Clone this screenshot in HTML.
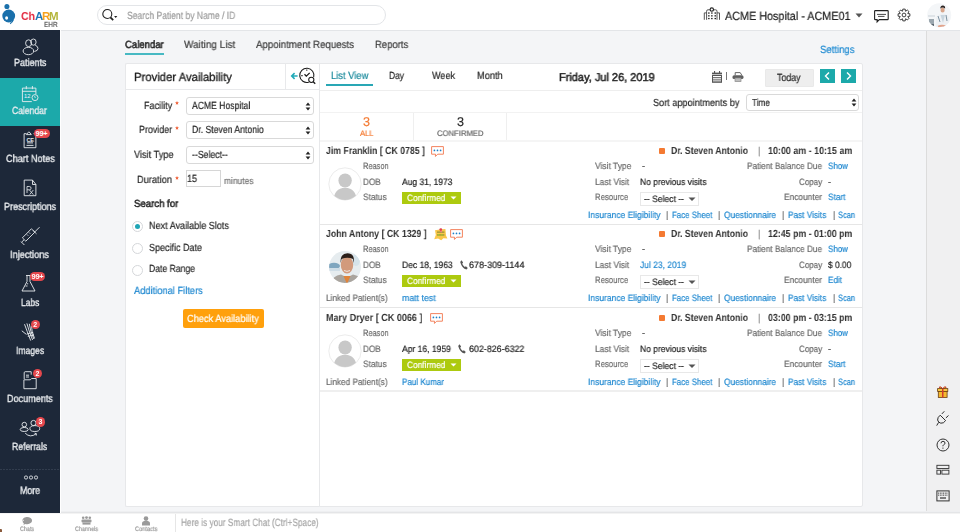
<!DOCTYPE html>
<html><head><meta charset="utf-8"><style>
html,body{margin:0;padding:0;width:960px;height:532px;overflow:hidden;background:#fff;font-family:"Liberation Sans",sans-serif;}
.t{position:absolute;white-space:nowrap;text-rendering:geometricPrecision;will-change:transform;}
svg{overflow:visible}
</style></head><body>
<div style="position:absolute;left:0px;top:0px;width:960px;height:30px;background:#fff"></div><div style="position:absolute;left:61px;top:30px;width:865px;height:483px;background:#f4f5f7"></div><div style="position:absolute;left:61px;top:30px;width:899px;height:1px;background:#e3e5e8"></div><div style="position:absolute;left:926px;top:30px;width:34px;height:483px;background:#f0f0f1"></div><div style="position:absolute;left:926px;top:30px;width:1px;height:483px;background:#dcdcdc"></div><div style="position:absolute;left:926px;top:30px;width:34px;height:1px;background:#e3e5e8"></div><div style="position:absolute;left:0px;top:30px;width:60px;height:483px;background:#1d2839"></div><div style="position:absolute;left:60px;top:30px;width:1px;height:483px;background:#fff"></div><div style="position:absolute;left:0px;top:78px;width:60px;height:48px;background:#1ca9aa"></div><div style="position:absolute;left:61px;top:511px;width:899px;height:1px;background:#eeeff1"></div><div style="position:absolute;left:61px;top:512px;width:899px;height:1px;background:#e4e5e7"></div><div style="position:absolute;left:0px;top:513px;width:960px;height:19px;background:#fff"></div><div style="position:absolute;left:0px;top:513px;width:960px;height:1px;background:#f3f3f3"></div><div style="position:absolute;left:175px;top:514px;width:1px;height:18px;background:#e6e6e6"></div><svg style="position:absolute;left:0px;top:0px;" width="60" height="30" viewBox="0 0 60 30">
<ellipse cx="6.9" cy="6.5" rx="2.5" ry="2.6" fill="#1a70ab"/>
<circle cx="8.7" cy="16" r="6.4" fill="#1a70ab"/>
<path d="M13.3,19.6 q-0.6,2.6 -3.2,4" stroke="#1a70ab" stroke-width="1.2" fill="none"/>
<ellipse cx="6.6" cy="18" rx="1.5" ry="1.8" fill="#fff"/>
</svg><div class="t" style="left:20.50px;top:12px;font-size:11.5px;line-height:11.5px;color:#e2263d;font-weight:700;transform:scaleX(0.9133);transform-origin:0 0;">Ch</div><div class="t" style="left:34.50px;top:12px;font-size:11.5px;line-height:11.5px;color:#1f78b9;font-weight:700;">A</div><div class="t" style="left:41.50px;top:12px;font-size:11.5px;line-height:11.5px;color:#f6a21e;font-weight:700;">R</div><div class="t" style="left:48.50px;top:12px;font-size:11.5px;line-height:11.5px;color:#b3b53a;font-weight:700;">M</div><div class="t" style="left:43.50px;top:21px;font-size:7.5px;line-height:7.5px;color:#666;font-weight:700;transform:scaleX(0.8527);transform-origin:0 0;">EHR</div><div style="position:absolute;left:97px;top:5px;width:287px;height:18px;border:1px solid #e3e5e8;border-radius:10px;background:#fff"></div><svg style="position:absolute;left:100px;top:9px;" width="20" height="13" viewBox="0 0 20 13"><circle cx="7.3" cy="5" r="4.5" fill="none" stroke="#222" stroke-width="1.1"/><path d="M10.4,8.3 l2.8,2.8" stroke="#222" stroke-width="1.8"/><path d="M14.1,7.1 h3.2 l-1.6,1.9z" fill="#222"/></svg><div class="t" style="left:126.70px;top:11px;font-size:10.5px;line-height:10.5px;color:#9d9d9d;font-weight:400;transform:scaleX(0.8139);transform-origin:0 0;-webkit-text-stroke:0.2px currentColor;">Search Patient by Name / ID</div><svg style="position:absolute;left:703px;top:7px;" width="18" height="14" viewBox="0 0 18 14"><g fill="none" stroke="#555" stroke-width="1"><path d="M3.6,12.8 V4.2 Q3.6,2.8 5,2.8 H12.6 Q14,2.8 14,4.2 V12.8"/><path d="M1.3,12.8 V5.9 H3.6 M14,5.9 H16.5 V12.8"/></g><circle cx="8.8" cy="2.6" r="1.7" fill="#fff" stroke="#222" stroke-width="1.1"/><g fill="#222"><rect x="5.1" y="5.4" width="1.5" height="1.3"/><rect x="8.1" y="5.4" width="1.5" height="1.3"/><rect x="11.5" y="5.4" width="1.5" height="1.3"/><rect x="5.1" y="8.2" width="1.5" height="1.3"/><rect x="8.1" y="8.2" width="1.5" height="1.3"/><rect x="11.5" y="8.2" width="1.5" height="1.3"/><rect x="5.1" y="10.9" width="1.5" height="1.3"/><rect x="8.1" y="10.9" width="1.5" height="1.3"/><rect x="11.5" y="10.9" width="1.5" height="1.3"/></g></svg><div class="t" style="left:725.00px;top:11px;font-size:11.9px;line-height:11.9px;color:#222;font-weight:400;transform:scaleX(0.9087);transform-origin:0 0;-webkit-text-stroke:0.2px currentColor;">ACME Hospital - ACME01</div><svg style="position:absolute;left:855px;top:13px;" width="8" height="5" viewBox="0 0 8 5"><path d="M0.5,0.5 h7 l-3.5,4z" fill="#555"/></svg><svg style="position:absolute;left:873px;top:9px;" width="16" height="14" viewBox="0 0 16 14"><path d="M2.3,1.6 h12.2 q0.7,0 0.7,0.7 v7.6 q0,0.7 -0.7,0.7 h-8.2 l-2.2,2.2 v-2.2 h-1.8 q-0.7,0 -0.7,-0.7 v-7.6 q0,-0.7 0.7,-0.7z" fill="none" stroke="#222" stroke-width="1.1"/><path d="M4,5.4 h9 M5,7.4 h6.5" stroke="#333" stroke-width="0.9"/></svg><svg style="position:absolute;left:897px;top:8px;" width="14" height="14" viewBox="0 0 14 14"><g fill="none" stroke="#333" stroke-width="0.95"><circle cx="7" cy="7" r="1.9"/><path d="M5.56,3.16 L5.81,1.12 L8.19,1.12 L8.44,3.16 L8.69,3.27 L10.32,2.00 L12.00,3.68 L10.73,5.31 L10.84,5.56 L12.88,5.81 L12.88,8.19 L10.84,8.44 L10.73,8.69 L12.00,10.32 L10.32,12.00 L8.69,10.73 L8.44,10.84 L8.19,12.88 L5.81,12.88 L5.56,10.84 L5.31,10.73 L3.68,12.00 L2.00,10.32 L3.27,8.69 L3.16,8.44 L1.12,8.19 L1.12,5.81 L3.16,5.56 L3.27,5.31 L2.00,3.68 L3.68,2.00 L5.31,3.27z" stroke-linejoin="round"/></g></svg><svg style="position:absolute;left:926px;top:2px;" width="26" height="26" viewBox="0 0 26 26"><defs><clipPath id="av"><circle cx="13.2" cy="13.2" r="12"/></clipPath></defs>
<g clip-path="url(#av)"><rect x="0" y="0" width="26" height="26" fill="#f4f6f8"/>
<rect x="2" y="13" width="7" height="2" fill="#dfe4e8"/><rect x="3" y="17" width="5" height="7" fill="#9aa6ae"/><rect x="4" y="22" width="4" height="4" fill="#5d6870"/>
<path d="M10,26 v-10 q2,-4 6,-4.5 q5,0 7,4 v10.5z" fill="#eef1f4"/>
<path d="M14.5,13 l2.5,8 l2,-8z" fill="#c9d6df"/><path d="M12,14 l2,6 M20,13 l1,6" stroke="#6f8796" stroke-width="0.9"/>
<ellipse cx="16.6" cy="8" rx="2.1" ry="2.6" fill="#d8a58a"/><path d="M14.2,6.8 q0.3,-3.3 2.6,-3.3 q2.6,0 2.3,3.3 q-1,-1.2 -2.4,-1.2 q-1.6,0 -2.5,1.2z" fill="#2b2321"/>
<path d="M12,24.5 q4,-1.5 8,0" stroke="#e2a58e" stroke-width="1.8" fill="none"/></g></svg><div class="t" style="left:13.50px;top:59px;font-size:10.4px;line-height:10.4px;color:#e9ecef;font-weight:400;transform:scaleX(0.8649);transform-origin:0 0;-webkit-text-stroke:0.35px currentColor;">Patients</div><div class="t" style="left:12.20px;top:107px;font-size:10.4px;line-height:10.4px;color:#e9ecef;font-weight:400;transform:scaleX(0.8246);transform-origin:0 0;-webkit-text-stroke:0.35px currentColor;">Calendar</div><div class="t" style="left:5.60px;top:155px;font-size:10.4px;line-height:10.4px;color:#e9ecef;font-weight:400;transform:scaleX(0.8813);transform-origin:0 0;-webkit-text-stroke:0.35px currentColor;">Chart Notes</div><div class="t" style="left:3.80px;top:203px;font-size:10.4px;line-height:10.4px;color:#e9ecef;font-weight:400;transform:scaleX(0.8684);transform-origin:0 0;-webkit-text-stroke:0.35px currentColor;">Prescriptions</div><div class="t" style="left:10.30px;top:251px;font-size:10.4px;line-height:10.4px;color:#e9ecef;font-weight:400;transform:scaleX(0.8853);transform-origin:0 0;-webkit-text-stroke:0.35px currentColor;">Injections</div><div class="t" style="left:20.70px;top:299px;font-size:10.4px;line-height:10.4px;color:#e9ecef;font-weight:400;transform:scaleX(0.8116);transform-origin:0 0;-webkit-text-stroke:0.35px currentColor;">Labs</div><div class="t" style="left:16.00px;top:347px;font-size:10.4px;line-height:10.4px;color:#e9ecef;font-weight:400;transform:scaleX(0.8269);transform-origin:0 0;-webkit-text-stroke:0.35px currentColor;">Images</div><div class="t" style="left:7.10px;top:395px;font-size:10.4px;line-height:10.4px;color:#e9ecef;font-weight:400;transform:scaleX(0.8726);transform-origin:0 0;-webkit-text-stroke:0.35px currentColor;">Documents</div><div class="t" style="left:12.20px;top:443px;font-size:10.4px;line-height:10.4px;color:#e9ecef;font-weight:400;transform:scaleX(0.8343);transform-origin:0 0;-webkit-text-stroke:0.35px currentColor;">Referrals</div><div class="t" style="left:19.70px;top:486px;font-size:10.8px;line-height:10.8px;color:#e9ecef;font-weight:400;transform:scaleX(0.8170);transform-origin:0 0;-webkit-text-stroke:0.4px currentColor;">More</div><svg style="position:absolute;left:20px;top:36px;" width="22" height="20" viewBox="0 0 22 20"><g stroke="#e9ecef" stroke-width="0.9" fill="none"><ellipse cx="13.4" cy="6.1" rx="2.7" ry="3.1"/><path d="M15.2,9.2 q2.8,1 2.8,3.4 q0,2.2 -3.6,2.9"/><ellipse cx="8.6" cy="7.2" rx="3" ry="3.4"/><ellipse cx="8.4" cy="15" rx="5.3" ry="3.7"/></g></svg><svg style="position:absolute;left:20px;top:84px;" width="22" height="19" viewBox="0 0 22 19"><g stroke="#e9ecef" stroke-width="0.9" fill="none"><path d="M11.8,17.6 h-9.4 v-13.5 h13.5 v6"/><path d="M2.4,7.3 h13.5"/><path d="M6.3,2 v3.2 M12.4,2 v3.2"/><circle cx="15" cy="13.6" r="3"/><path d="M14.6,12.2 l0.7,1.7"/></g><text x="4" y="14.2" font-family="Liberation Sans" font-size="5.8" fill="#eef">12</text></svg><svg style="position:absolute;left:22px;top:130px;" width="14" height="18" viewBox="0 0 14 18"><g stroke="#e9ecef" stroke-width="0.9" fill="none"><path d="M4.5,3.7 h-2.4 v14 h11.8 v-14 h-2.4"/><path d="M4.5,4.6 l1.2,-1.6 l1.2,-1.2 l1.2,1.2 l1.2,1.6z"/><path d="M5,12.9 h6 M4.5,15.4 h7"/></g><text x="4.4" y="11.6" font-family="Liberation Sans" font-size="5.5" font-weight="700" fill="#e9ecef">CE</text></svg><svg style="position:absolute;left:22px;top:179px;" width="16" height="18" viewBox="0 0 16 18"><g stroke="#e9ecef" stroke-width="0.9" fill="none"><path d="M2.2,1.1 h8.3 l3.4,4.4 v11.2 h-11.7z M10.5,1.1 v4.4 h3.4"/><path d="M5,14 v-6.5 h2.3 q1.8,0 1.8,1.7 q0,1.6 -1.8,1.6 h-2.3 M7.3,10.8 l4,4.8 M11.3,11 l-3.6,4.6" stroke-width="0.8"/></g></svg><svg style="position:absolute;left:20px;top:226px;" width="22" height="21" viewBox="0 0 22 21"><g stroke="#e9ecef" stroke-width="0.9" fill="none"><path d="M19.5,1.2 l-4.8,4.8 M13.2,4.5 l3.3,3.3 M14.8,6.2 l-9,9 l-3.4,-3.4 l9,-9z M4,13.8 l-2.4,2.4 M1,15.6 l3.4,3.4 M7,8.5 l1.2,1.2 M9,6.5 l1.2,1.2"/></g></svg><svg style="position:absolute;left:20px;top:274px;" width="18" height="19" viewBox="0 0 18 19"><g stroke="#e9ecef" stroke-width="0.9" fill="none"><path d="M6,1.5 h5 M7,1.5 v6 l-5,9.5 h13 l-5,-9.5 v-6"/><path d="M5.5,12 h2 M6.8,9.8 h1.4"/></g></svg><svg style="position:absolute;left:20px;top:321px;" width="18" height="22" viewBox="0 0 18 22"><g stroke="#e9ecef" stroke-width="0.9" fill="none" stroke-width="1"><path d="M4.5,3.2 l2.6,7 M6.9,2.4 l2.3,7.6 M9.3,2.8 l1.5,7.2 M11.6,5 l0.5,5.2 M1.8,9.8 l4.6,3.6 M7.1,10.2 l3.6,9.4 M9.2,10 l3.4,9 M10.8,10 l3,8 M12.1,10.2 l2.4,7.2 M6.8,13 l6.4,-1.6 M7.8,15.4 l6,-1.6"/></g></svg><svg style="position:absolute;left:21px;top:371px;" width="18" height="19" viewBox="0 0 18 19"><g stroke="#e9ecef" stroke-width="0.9" fill="none"><path d="M3.2,8 v-6.7 l1,-0.6 h6 v3"/><path d="M2.9,8.8 h6.4 l1.3,-1.3 h4.6 v10.2 h-12.3z"/><path d="M5,4.2 h3 M5,6 h3"/></g></svg><svg style="position:absolute;left:18px;top:420px;" width="24" height="19" viewBox="0 0 24 19"><g stroke="#e9ecef" stroke-width="0.9" fill="none"><circle cx="6.3" cy="4.6" r="2.3"/><path d="M2.2,9.6 q0,-2 4,-2.2 q4,0.2 4,2.2 q0,1.9 -4,1.9 q-4,0 -4,-1.9z"/><circle cx="15.5" cy="3" r="2.6"/><path d="M11.9,8.6 q0,-2.9 4.9,-3 q4.9,0.1 4.9,3 q0,2.9 -4.9,2.9 q-4.9,0 -4.9,-2.9z"/><path d="M7.2,13.2 q5,5 11,0.6 M16.6,13.2 l1.8,0.5 l-0.2,1.9"/></g></svg><svg style="position:absolute;left:23px;top:475px;" width="16" height="6" viewBox="0 0 16 6"><g stroke="#e9ecef" stroke-width="0.9" fill="none"><rect x="1.5" y="1" width="3" height="3" rx="1.2"/><rect x="6.5" y="1" width="3" height="3" rx="1.2"/><rect x="11.5" y="1" width="3" height="3" rx="1.2"/></g></svg><div style="position:absolute;left:0;top:469px;width:60px;height:1px;background:repeating-linear-gradient(90deg,#465264 0 1.2px,transparent 1.2px 3px);background-position:3.5px 0"></div><div style="position:absolute;left:33.5px;top:128.5px;width:16px;height:9px;border-radius:4.5px;background:#e5484d;color:#fff;font-size:7.5px;line-height:9px;text-align:center;font-weight:700;letter-spacing:-0.3px">99+</div><div style="position:absolute;left:30px;top:271.8px;width:15px;height:9px;border-radius:4.5px;background:#e5484d;color:#fff;font-size:7.5px;line-height:9px;text-align:center;font-weight:700;letter-spacing:-0.3px">99+</div><div style="position:absolute;left:30.6px;top:320.2px;width:9px;height:9px;border-radius:4.5px;background:#e5484d;color:#fff;font-size:7px;line-height:9px;text-align:center;font-weight:700;letter-spacing:-0.3px">2</div><div style="position:absolute;left:32.8px;top:369px;width:9px;height:9px;border-radius:4.5px;background:#e5484d;color:#fff;font-size:7px;line-height:9px;text-align:center;font-weight:700;letter-spacing:-0.3px">2</div><div style="position:absolute;left:35.6px;top:417.3px;width:9.4px;height:9.4px;border-radius:4.7px;background:#e5484d;color:#fff;font-size:7px;line-height:9.4px;text-align:center;font-weight:700;letter-spacing:-0.3px">3</div><svg style="position:absolute;left:21px;top:516px;" width="13" height="10" viewBox="0 0 13 10"><path d="M5.5,1 a5,3.6 0 1 1 -1,7 l-2.6,1.2 l1,-2 a5,3.6 0 0 1 2.6,-6.2z" fill="#9a9a9a"/><path d="M3,4 a4,3 0 0 0 1,5.5" stroke="#fff" fill="none" stroke-width="0.7"/></svg><div class="t" style="left:20.00px;top:527px;font-size:6.5px;line-height:6.5px;color:#9a9a9a;font-weight:400;transform:scaleX(0.8246);transform-origin:0 0;-webkit-text-stroke:0.2px currentColor;">Chats</div><svg style="position:absolute;left:81px;top:516px;" width="11" height="9" viewBox="0 0 11 9"><g fill="#9a9a9a"><circle cx="2.2" cy="1.8" r="1.3"/><circle cx="5.5" cy="1.6" r="1.4"/><circle cx="8.8" cy="1.8" r="1.3"/><rect x="0.5" y="3.6" width="10" height="3" rx="1"/><rect x="1.5" y="6.6" width="8" height="2"/></g></svg><div class="t" style="left:75.00px;top:527px;font-size:6.5px;line-height:6.5px;color:#9a9a9a;font-weight:400;transform:scaleX(0.8375);transform-origin:0 0;-webkit-text-stroke:0.2px currentColor;">Channels</div><svg style="position:absolute;left:142px;top:516px;" width="8" height="10" viewBox="0 0 8 10"><g fill="#9a9a9a"><circle cx="4" cy="2.6" r="2.3"/><path d="M0,9.5 v-2.2 q0,-2.5 4,-2.5 q4,0 4,2.5 v2.2z"/></g></svg><div class="t" style="left:134.90px;top:527px;font-size:6.5px;line-height:6.5px;color:#9a9a9a;font-weight:400;transform:scaleX(0.8694);transform-origin:0 0;-webkit-text-stroke:0.2px currentColor;">Contacts</div><div class="t" style="left:180.80px;top:518px;font-size:10.5px;line-height:10.5px;color:#a8a8a8;font-weight:400;transform:scaleX(0.7874);transform-origin:0 0;-webkit-text-stroke:0.2px currentColor;">Here is your Smart Chat (Ctrl+Space)</div><div style="position:absolute;left:0px;top:529px;width:2px;height:3px;background:#8a5a3c;border-top-right-radius:1px"></div><svg style="position:absolute;left:937px;top:386px;" width="12" height="12" viewBox="0 0 12 12"><path d="M5.7,2.6 q-2,-2.6 -3.4,-1.6 q-0.6,1.2 3.4,1.6 q4,-0.4 3.4,-1.6 q-1.4,-1 -3.4,1.6" fill="#f7c94a" stroke="#c0392b" stroke-width="0.9"/><rect x="0.6" y="2.6" width="10.2" height="2.8" fill="#f9c743" stroke="#6b3f12" stroke-width="0.8"/><rect x="1.3" y="5.4" width="8.8" height="6.1" fill="#f5b92f" stroke="#6b3f12" stroke-width="0.8"/><rect x="5" y="2.6" width="1.5" height="8.9" fill="#d23b2e"/></svg><svg style="position:absolute;left:935px;top:410px;" width="15" height="16" viewBox="0 0 15 16"><g fill="none" stroke="#222" stroke-width="0.95"><path d="M5.2,5.2 L10.6,10.6 Q8.6,13.6 5.8,13.2 Q3.2,12.6 2.6,10 Q2.4,7.4 5.2,5.2z"/><path d="M6.9,3.9 l2.4,-2.6 M10.9,7.9 l2.6,-2.4 M3.6,12.4 l-1.9,3.2"/></g></svg><svg style="position:absolute;left:936px;top:438px;" width="14" height="14" viewBox="0 0 14 14"><circle cx="7" cy="7" r="6" fill="none" stroke="#333" stroke-width="1"/><path d="M5,5.3 q0,-2 2,-2 q2,0 2,1.8 q0,1.3 -1.6,1.9 q-0.5,0.3 -0.5,1.3" fill="none" stroke="#333" stroke-width="1"/><circle cx="6.95" cy="10.1" r="0.7" fill="#333"/></svg><svg style="position:absolute;left:936px;top:464px;" width="14" height="11" viewBox="0 0 14 11"><g fill="none" stroke="#333" stroke-width="0.9"><rect x="0.9" y="1.3" width="12" height="3.2"/><rect x="0.9" y="6.2" width="3.6" height="3.9"/><rect x="5.9" y="6.2" width="7" height="3.9"/></g></svg><svg style="position:absolute;left:936px;top:490px;" width="14" height="12" viewBox="0 0 14 12"><rect x="0.9" y="0.9" width="12.2" height="10" fill="none" stroke="#333" stroke-width="1"/><g fill="#333"><rect x="2.20" y="2.6" width="0.9" height="1.1"/><rect x="3.85" y="2.6" width="0.9" height="1.1"/><rect x="5.50" y="2.6" width="0.9" height="1.1"/><rect x="7.15" y="2.6" width="0.9" height="1.1"/><rect x="8.80" y="2.6" width="0.9" height="1.1"/><rect x="10.45" y="2.6" width="0.9" height="1.1"/><rect x="2.20" y="4.6" width="0.9" height="1.1"/><rect x="3.85" y="4.6" width="0.9" height="1.1"/><rect x="5.50" y="4.6" width="0.9" height="1.1"/><rect x="7.15" y="4.6" width="0.9" height="1.1"/><rect x="8.80" y="4.6" width="0.9" height="1.1"/><rect x="10.45" y="4.6" width="0.9" height="1.1"/><rect x="4" y="7.4" width="6" height="1.2"/></g></svg><div class="t" style="left:125.25px;top:40px;font-size:10.5px;line-height:10.5px;color:#282828;font-weight:400;transform:scaleX(0.9094);transform-origin:0 0;-webkit-text-stroke:0.55px currentColor;">Calendar</div><div style="position:absolute;left:125px;top:53px;width:39px;height:2px;background:#47b9c3"></div><div class="t" style="left:184.40px;top:40px;font-size:10.5px;line-height:10.5px;color:#3d3d3d;font-weight:400;transform:scaleX(0.9503);transform-origin:0 0;-webkit-text-stroke:0.2px currentColor;">Waiting List</div><div class="t" style="left:256.00px;top:40px;font-size:10.5px;line-height:10.5px;color:#3d3d3d;font-weight:400;transform:scaleX(0.9225);transform-origin:0 0;-webkit-text-stroke:0.2px currentColor;">Appointment Requests</div><div class="t" style="left:374.70px;top:40px;font-size:10.5px;line-height:10.5px;color:#3d3d3d;font-weight:400;transform:scaleX(0.9059);transform-origin:0 0;-webkit-text-stroke:0.2px currentColor;">Reports</div><div class="t" style="left:819.90px;top:45px;font-size:10.5px;line-height:10.5px;color:#1f8bd2;font-weight:400;transform:scaleX(0.9094);transform-origin:0 0;-webkit-text-stroke:0.2px currentColor;">Settings</div><div style="position:absolute;left:125px;top:63px;width:194px;height:442px;background:#fff;border:1px solid #e7e8ea;border-right:none;border-radius:2px 0 0 2px"></div><div style="position:absolute;left:125px;top:89px;width:195px;height:1px;background:#e8e9eb"></div><div style="position:absolute;left:285px;top:63px;width:1px;height:27px;background:#e8e9eb"></div><div class="t" style="left:133.80px;top:72px;font-size:11.9px;line-height:11.9px;color:#181818;font-weight:400;transform:scaleX(0.9509);transform-origin:0 0;-webkit-text-stroke:0.3px currentColor;">Provider Availability</div><svg style="position:absolute;left:290px;top:66px;" width="27" height="20" viewBox="0 0 27 20"><path d="M1.8,10 h5.8 M4.6,7.1 l-2.9,2.9 l2.9,2.9" fill="none" stroke="#22aab9" stroke-width="1.6"/><g fill="none" stroke="#1a1a1a" stroke-width="1.05"><path d="M23.7,11.2 A7.1,7.1 0 1 0 18.8,16.2"/><path d="M16.8,3.4 v1.3 M11.3,9.6 h1.3"/><path d="M14.5,8.3 l1.8,1.8 l3.4,-3.2" stroke-width="1.3"/><circle cx="21.3" cy="13.8" r="2.6"/><path d="M23.2,15.7 l2,2" stroke-width="1.3"/></g></svg><div class="t" style="left:143.75px;top:102px;font-size:10.4px;line-height:10.4px;color:#282828;font-weight:400;transform:scaleX(0.8701);transform-origin:0 0;-webkit-text-stroke:0.2px currentColor;">Facility</div><svg style="position:absolute;left:174.5px;top:101.3px;" width="4" height="4" viewBox="0 0 4 4"><path d="M2,0 L2.6,1.3 L4,1.4 L2.9,2.3 L3.2,3.8 L2,3 L0.8,3.8 L1.1,2.3 L0,1.4 L1.4,1.3z" fill="#f0643c"/></svg><div style="position:absolute;left:186px;top:97px;width:126px;height:16px;border:1px solid #d9d9d9;border-radius:3px;background:#fff"></div><div class="t" style="left:191.70px;top:102px;font-size:10.4px;line-height:10.4px;color:#282828;font-weight:400;transform:scaleX(0.8268);transform-origin:0 0;-webkit-text-stroke:0.2px currentColor;">ACME Hospital</div><svg style="position:absolute;left:305px;top:101.5px;" width="6" height="9" viewBox="0 0 6 9"><path d="M3,0.5 l2.4,3h-4.8z M3,8.5 l2.4,-3h-4.8z" fill="#222"/></svg><div class="t" style="left:138.50px;top:126px;font-size:10.4px;line-height:10.4px;color:#282828;font-weight:400;transform:scaleX(0.8546);transform-origin:0 0;-webkit-text-stroke:0.2px currentColor;">Provider</div><svg style="position:absolute;left:174.5px;top:125.8px;" width="4" height="4" viewBox="0 0 4 4"><path d="M2,0 L2.6,1.3 L4,1.4 L2.9,2.3 L3.2,3.8 L2,3 L0.8,3.8 L1.1,2.3 L0,1.4 L1.4,1.3z" fill="#f0643c"/></svg><div style="position:absolute;left:186px;top:121px;width:126px;height:16px;border:1px solid #d9d9d9;border-radius:3px;background:#fff"></div><div class="t" style="left:191.70px;top:126px;font-size:10.4px;line-height:10.4px;color:#282828;font-weight:400;transform:scaleX(0.8335);transform-origin:0 0;-webkit-text-stroke:0.2px currentColor;">Dr. Steven Antonio</div><svg style="position:absolute;left:305px;top:125.5px;" width="6" height="9" viewBox="0 0 6 9"><path d="M3,0.5 l2.4,3h-4.8z M3,8.5 l2.4,-3h-4.8z" fill="#222"/></svg><div class="t" style="left:133.75px;top:151px;font-size:10.4px;line-height:10.4px;color:#282828;font-weight:400;transform:scaleX(0.8846);transform-origin:0 0;-webkit-text-stroke:0.2px currentColor;">Visit Type</div><div style="position:absolute;left:186px;top:146px;width:126px;height:16px;border:1px solid #d9d9d9;border-radius:3px;background:#fff"></div><div class="t" style="left:191.70px;top:151px;font-size:10.4px;line-height:10.4px;color:#282828;font-weight:400;transform:scaleX(0.8373);transform-origin:0 0;-webkit-text-stroke:0.2px currentColor;">--Select--</div><svg style="position:absolute;left:305px;top:150.5px;" width="6" height="9" viewBox="0 0 6 9"><path d="M3,0.5 l2.4,3h-4.8z M3,8.5 l2.4,-3h-4.8z" fill="#222"/></svg><div class="t" style="left:137.00px;top:176px;font-size:10.4px;line-height:10.4px;color:#282828;font-weight:400;transform:scaleX(0.8903);transform-origin:0 0;-webkit-text-stroke:0.2px currentColor;">Duration</div><svg style="position:absolute;left:174.5px;top:175.8px;" width="4" height="4" viewBox="0 0 4 4"><path d="M2,0 L2.6,1.3 L4,1.4 L2.9,2.3 L3.2,3.8 L2,3 L0.8,3.8 L1.1,2.3 L0,1.4 L1.4,1.3z" fill="#f0643c"/></svg><div style="position:absolute;left:186px;top:170px;width:33px;height:15px;border:1px solid #d6d6d6;background:#fff"></div><div class="t" style="left:187.00px;top:175px;font-size:10.4px;line-height:10.4px;color:#282828;font-weight:400;transform:scaleX(0.8647);transform-origin:0 0;-webkit-text-stroke:0.2px currentColor;">15</div><div class="t" style="left:223.50px;top:176px;font-size:9.4px;line-height:9.4px;color:#777;font-weight:400;transform:scaleX(0.8964);transform-origin:0 0;-webkit-text-stroke:0.2px currentColor;">minutes</div><div class="t" style="left:133.70px;top:200px;font-size:10.4px;line-height:10.4px;color:#282828;font-weight:400;transform:scaleX(0.9234);transform-origin:0 0;-webkit-text-stroke:0.55px currentColor;">Search for</div><div style="position:absolute;left:132px;top:221.3px;width:9px;height:9px;border:1px solid #d5d7da;border-radius:50%;background:#fff"></div><div style="position:absolute;left:135px;top:224.3px;width:5px;height:5px;border-radius:50%;background:#1fa5b5"></div><div style="position:absolute;left:132px;top:243px;width:9px;height:9px;border:1px solid #d5d7da;border-radius:50%;background:#fff"></div><div style="position:absolute;left:132px;top:264.7px;width:9px;height:9px;border:1px solid #d5d7da;border-radius:50%;background:#fff"></div><div class="t" style="left:149.00px;top:222px;font-size:10.4px;line-height:10.4px;color:#282828;font-weight:400;transform:scaleX(0.8721);transform-origin:0 0;-webkit-text-stroke:0.2px currentColor;">Next Available Slots</div><div class="t" style="left:149.00px;top:244px;font-size:10.4px;line-height:10.4px;color:#282828;font-weight:400;transform:scaleX(0.8649);transform-origin:0 0;-webkit-text-stroke:0.2px currentColor;">Specific Date</div><div class="t" style="left:149.00px;top:265px;font-size:10.4px;line-height:10.4px;color:#282828;font-weight:400;transform:scaleX(0.8288);transform-origin:0 0;-webkit-text-stroke:0.2px currentColor;">Date Range</div><div class="t" style="left:133.70px;top:287px;font-size:10.4px;line-height:10.4px;color:#1f88d0;font-weight:400;transform:scaleX(0.8962);transform-origin:0 0;-webkit-text-stroke:0.2px currentColor;">Additional Filters</div><div style="position:absolute;left:183px;top:309px;width:81px;height:19px;background:#ffa00c;border-radius:2px"></div><div class="t" style="left:187.00px;top:315px;font-size:10.4px;line-height:10.4px;color:#fff;font-weight:400;transform:scaleX(0.8906);transform-origin:0 0;-webkit-text-stroke:0.2px currentColor;">Check Availability</div><div style="position:absolute;left:319px;top:63px;width:542px;height:442px;background:#fff;border:1px solid #e7e8ea;border-radius:0 2px 2px 0"></div><div style="position:absolute;left:320px;top:90px;width:542px;height:1px;background:#eeeeee"></div><div class="t" style="left:331.00px;top:72px;font-size:10.4px;line-height:10.4px;color:#1b8a9c;font-weight:400;transform:scaleX(0.9022);transform-origin:0 0;-webkit-text-stroke:0.2px currentColor;">List View</div><div style="position:absolute;left:326px;top:84px;width:47px;height:2px;background:#29a7b5"></div><div class="t" style="left:388.80px;top:72px;font-size:10.4px;line-height:10.4px;color:#282828;font-weight:400;transform:scaleX(0.8112);transform-origin:0 0;-webkit-text-stroke:0.2px currentColor;">Day</div><div class="t" style="left:431.50px;top:72px;font-size:10.4px;line-height:10.4px;color:#282828;font-weight:400;transform:scaleX(0.8707);transform-origin:0 0;-webkit-text-stroke:0.2px currentColor;">Week</div><div class="t" style="left:476.75px;top:72px;font-size:10.4px;line-height:10.4px;color:#282828;font-weight:400;transform:scaleX(0.8875);transform-origin:0 0;-webkit-text-stroke:0.2px currentColor;">Month</div><div class="t" style="left:559.40px;top:73px;font-size:11.4px;line-height:11.4px;color:#282828;font-weight:400;transform:scaleX(0.9649);transform-origin:0 0;-webkit-text-stroke:0.55px currentColor;">Friday, Jul 26, 2019</div><svg style="position:absolute;left:711px;top:70px;" width="13" height="14" viewBox="0 0 13 14"><g fill="#555"><rect x="1" y="2.6" width="10" height="1.6"/><rect x="3" y="1" width="1.1" height="2"/><rect x="8" y="1" width="1.1" height="2"/><rect x="1" y="4.8" width="10" height="8"/></g><g fill="#fff"><rect x="2" y="6" width="8" height="1"/><rect x="2" y="7.8" width="8" height="1"/><rect x="2" y="9.6" width="8" height="1"/><rect x="2" y="11.3" width="8" height="0.6" fill="#bbb"/></g></svg><div style="position:absolute;left:726px;top:72px;width:1px;height:8px;background:#777"></div><svg style="position:absolute;left:731px;top:71px;" width="14" height="12" viewBox="0 0 14 12"><path d="M4.2,4.2 v-2.6 h5 l1.6,2.6" fill="#fff" stroke="#666" stroke-width="1"/><rect x="1.5" y="4.2" width="11" height="3.8" rx="1.6" fill="#5f5f5f"/><rect x="4" y="7" width="6" height="3.6" fill="#bdbdbd" stroke="#8a8a8a" stroke-width="0.7"/></svg><div style="position:absolute;left:765px;top:69px;width:47px;height:16px;background:#eeeeee;border:1px solid #e9e9e9;border-radius:1px"></div><div class="t" style="left:777.00px;top:74px;font-size:10.4px;line-height:10.4px;color:#282828;font-weight:400;transform:scaleX(0.8505);transform-origin:0 0;-webkit-text-stroke:0.2px currentColor;">Today</div><div style="position:absolute;left:820px;top:69px;width:15px;height:14px;background:#1ca9aa"></div><svg style="position:absolute;left:820px;top:69px;" width="15" height="14" viewBox="0 0 15 14"><path d="M9,3.5 l-3.5,3.5 l3.5,3.5" fill="none" stroke="#fff" stroke-width="1.4"/></svg><div style="position:absolute;left:841px;top:69px;width:15px;height:14px;background:#1ca9aa"></div><svg style="position:absolute;left:841px;top:69px;" width="15" height="14" viewBox="0 0 15 14"><path d="M6,3.5 l3.5,3.5 l-3.5,3.5" fill="none" stroke="#fff" stroke-width="1.4"/></svg><div class="t" style="left:653.40px;top:99px;font-size:10.2px;line-height:10.2px;color:#282828;font-weight:400;transform:scaleX(0.8974);transform-origin:0 0;-webkit-text-stroke:0.2px currentColor;">Sort appointments by</div><div style="position:absolute;left:746px;top:94px;width:111px;height:15px;border:1px solid #d9d9d9;border-radius:3px;background:#fff"></div><div class="t" style="left:752.00px;top:99px;font-size:10.2px;line-height:10.2px;color:#282828;font-weight:400;transform:scaleX(0.8076);transform-origin:0 0;-webkit-text-stroke:0.2px currentColor;">Time</div><svg style="position:absolute;left:851px;top:97.5px;" width="6" height="9" viewBox="0 0 6 9"><path d="M3,0.5 l2.4,3h-4.8z M3,8.5 l2.4,-3h-4.8z" fill="#222"/></svg><div style="position:absolute;left:320px;top:112px;width:542px;height:1px;background:#f2f2f2"></div><div style="position:absolute;left:320px;top:140px;width:542px;height:2px;background:#f5f5f5"></div><div style="position:absolute;left:413px;top:113px;width:1px;height:27px;background:#efefef"></div><div style="position:absolute;left:506px;top:113px;width:1px;height:27px;background:#efefef"></div><div class="t" style="left:363.40px;top:116px;font-size:12.6px;line-height:12.6px;color:#f47a32;font-weight:400;-webkit-text-stroke:0.2px currentColor;">3</div><div class="t" style="left:359.70px;top:130px;font-size:8px;line-height:8px;color:#f47a32;font-weight:400;transform:scaleX(0.9486);transform-origin:0 0;-webkit-text-stroke:0.2px currentColor;">ALL</div><div class="t" style="left:456.50px;top:116px;font-size:12.6px;line-height:12.6px;color:#282828;font-weight:400;-webkit-text-stroke:0.2px currentColor;">3</div><div class="t" style="left:436.75px;top:130px;font-size:8px;line-height:8px;color:#666;font-weight:400;transform:scaleX(0.9589);transform-origin:0 0;-webkit-text-stroke:0.2px currentColor;">CONFIRMED</div><div class="t" style="left:326.30px;top:147px;font-size:10.3px;line-height:10.3px;color:#333;font-weight:700;transform:scaleX(0.8478);transform-origin:0 0;">Jim Franklin [ CK 0785 ]</div><svg style="position:absolute;left:430.8px;top:145px;" width="14" height="12" viewBox="0 0 14 12"><path d="M0.6,1.6 h11.8 v7.6 h-5.6 l-2.4,2.2 l0.1,-2.2 h-3.9z" fill="#fff" stroke="#f3845f" stroke-width="1"/><g fill="#1f80c6"><circle cx="3.4" cy="5.4" r="0.85"/><circle cx="6.5" cy="5.4" r="0.85"/><circle cx="9.6" cy="5.4" r="0.85"/></g></svg><svg style="position:absolute;left:327.5px;top:166.5px;" width="34" height="34" viewBox="0 0 34 34"><defs><clipPath id="pc166"><circle cx="17" cy="17" r="16"/></clipPath></defs><circle cx="17" cy="17" r="16.2" fill="#fff" stroke="#e2e2e2" stroke-width="0.7"/><g clip-path="url(#pc166)" fill="#c8c8c8"><ellipse cx="17.1" cy="13.5" rx="6.7" ry="7.1"/><path d="M5.8,33 q0,-11.5 11.3,-12.3 q11.3,0.8 11.3,12.3z"/></g></svg><div class="t" style="left:363.30px;top:162px;font-size:9.2px;line-height:9.2px;color:#6b6b6b;font-weight:400;transform:scaleX(0.8104);transform-origin:0 0;-webkit-text-stroke:0.2px currentColor;">Reason</div><div class="t" style="left:363.30px;top:178px;font-size:9.2px;line-height:9.2px;color:#6b6b6b;font-weight:400;transform:scaleX(0.8878);transform-origin:0 0;-webkit-text-stroke:0.2px currentColor;">DOB</div><div class="t" style="left:363.30px;top:193px;font-size:9.2px;line-height:9.2px;color:#6b6b6b;font-weight:400;transform:scaleX(0.9087);transform-origin:0 0;-webkit-text-stroke:0.2px currentColor;">Status</div><div class="t" style="left:401.70px;top:178px;font-size:9.2px;line-height:9.2px;color:#222;font-weight:400;transform:scaleX(0.9225);transform-origin:0 0;-webkit-text-stroke:0.2px currentColor;">Aug 31, 1973</div><div style="position:absolute;left:402px;top:192px;width:59px;height:12px;background:#adca0f"></div><div class="t" style="left:406.60px;top:194px;font-size:9.2px;line-height:9.2px;color:#fff;font-weight:400;transform:scaleX(0.9048);transform-origin:0 0;-webkit-text-stroke:0.2px currentColor;">Confirmed</div><svg style="position:absolute;left:450px;top:196px;" width="7" height="4" viewBox="0 0 7 4"><path d="M0.5,0.5 h6 l-3,3z" fill="#fff"/></svg><div style="position:absolute;left:659px;top:148px;width:6px;height:6px;background:#f47a32;border-radius:1px"></div><div class="t" style="left:671.00px;top:147px;font-size:10.3px;line-height:10.3px;color:#333;font-weight:700;transform:scaleX(0.8392);transform-origin:0 0;">Dr. Steven Antonio</div><div class="t" style="left:758.00px;top:147px;font-size:10px;line-height:10px;color:#999;font-weight:400;-webkit-text-stroke:0.2px currentColor;">|</div><div class="t" style="left:768.00px;top:147px;font-size:10.3px;line-height:10.3px;color:#333;font-weight:700;transform:scaleX(0.8661);transform-origin:0 0;">10:00 am - 10:15 am</div><div class="t" style="left:594.70px;top:162px;font-size:9.2px;line-height:9.2px;color:#6b6b6b;font-weight:400;transform:scaleX(0.9178);transform-origin:0 0;-webkit-text-stroke:0.2px currentColor;">Visit Type</div><div class="t" style="left:641.50px;top:162px;font-size:9.2px;line-height:9.2px;color:#555;font-weight:400;-webkit-text-stroke:0.2px currentColor;">-</div><div class="t" style="left:594.70px;top:178px;font-size:9.2px;line-height:9.2px;color:#6b6b6b;font-weight:400;transform:scaleX(0.9231);transform-origin:0 0;-webkit-text-stroke:0.2px currentColor;">Last Visit</div><div class="t" style="left:640.00px;top:178px;font-size:9.2px;line-height:9.2px;color:#222;font-weight:400;transform:scaleX(0.9238);transform-origin:0 0;-webkit-text-stroke:0.2px currentColor;">No previous visits</div><div class="t" style="left:594.70px;top:193px;font-size:9.2px;line-height:9.2px;color:#6b6b6b;font-weight:400;transform:scaleX(0.8457);transform-origin:0 0;-webkit-text-stroke:0.2px currentColor;">Resource</div><div style="position:absolute;left:640px;top:192px;width:57px;height:12px;border:1px solid #e8e8e8;background:#fff"></div><div class="t" style="left:644.00px;top:195px;font-size:9.2px;line-height:9.2px;color:#222;font-weight:400;transform:scaleX(0.9316);transform-origin:0 0;-webkit-text-stroke:0.2px currentColor;">-- Select --</div><svg style="position:absolute;left:687.6px;top:196.6px;" width="8" height="5" viewBox="0 0 8 5"><path d="M0.5,0.5 h7 l-3.5,3.6z" fill="#555"/></svg><div class="t" style="left:746.80px;top:162px;font-size:9.2px;line-height:9.2px;color:#6b6b6b;font-weight:400;transform:scaleX(0.8954);transform-origin:0 0;-webkit-text-stroke:0.2px currentColor;">Patient Balance Due</div><div class="t" style="left:827.80px;top:162px;font-size:9.2px;line-height:9.2px;color:#1f88d0;font-weight:400;transform:scaleX(0.8682);transform-origin:0 0;-webkit-text-stroke:0.2px currentColor;">Show</div><div class="t" style="left:798.80px;top:178px;font-size:9.2px;line-height:9.2px;color:#6b6b6b;font-weight:400;transform:scaleX(0.8723);transform-origin:0 0;-webkit-text-stroke:0.2px currentColor;">Copay</div><div class="t" style="left:828.00px;top:178px;font-size:9.2px;line-height:9.2px;color:#555;font-weight:400;-webkit-text-stroke:0.2px currentColor;">-</div><div class="t" style="left:783.90px;top:193px;font-size:9.2px;line-height:9.2px;color:#6b6b6b;font-weight:400;transform:scaleX(0.9084);transform-origin:0 0;-webkit-text-stroke:0.2px currentColor;">Encounter</div><div class="t" style="left:828.00px;top:193px;font-size:9.2px;line-height:9.2px;color:#1f88d0;font-weight:400;transform:scaleX(0.9058);transform-origin:0 0;-webkit-text-stroke:0.2px currentColor;">Start</div><div class="t" style="left:587.70px;top:211px;font-size:9.2px;line-height:9.2px;color:#1f88d0;font-weight:400;transform:scaleX(0.9232);transform-origin:0 0;-webkit-text-stroke:0.2px currentColor;">Insurance Eligibility</div><div class="t" style="left:666.20px;top:211px;font-size:9.2px;line-height:9.2px;color:#777;font-weight:400;-webkit-text-stroke:0.2px currentColor;">|</div><div class="t" style="left:671.90px;top:211px;font-size:9.2px;line-height:9.2px;color:#1f88d0;font-weight:400;transform:scaleX(0.8587);transform-origin:0 0;-webkit-text-stroke:0.2px currentColor;">Face Sheet</div><div class="t" style="left:718.20px;top:211px;font-size:9.2px;line-height:9.2px;color:#777;font-weight:400;-webkit-text-stroke:0.2px currentColor;">|</div><div class="t" style="left:724.00px;top:211px;font-size:9.2px;line-height:9.2px;color:#1f88d0;font-weight:400;transform:scaleX(0.9113);transform-origin:0 0;-webkit-text-stroke:0.2px currentColor;">Questionnaire</div><div class="t" style="left:782.20px;top:211px;font-size:9.2px;line-height:9.2px;color:#777;font-weight:400;-webkit-text-stroke:0.2px currentColor;">|</div><div class="t" style="left:787.90px;top:211px;font-size:9.2px;line-height:9.2px;color:#1f88d0;font-weight:400;transform:scaleX(0.8953);transform-origin:0 0;-webkit-text-stroke:0.2px currentColor;">Past Visits</div><div class="t" style="left:832.70px;top:211px;font-size:9.2px;line-height:9.2px;color:#777;font-weight:400;-webkit-text-stroke:0.2px currentColor;">|</div><div class="t" style="left:837.90px;top:211px;font-size:9.2px;line-height:9.2px;color:#1f88d0;font-weight:400;transform:scaleX(0.8156);transform-origin:0 0;-webkit-text-stroke:0.2px currentColor;">Scan</div><div style="position:absolute;left:320px;top:224px;width:542px;height:1px;background:#e6e6e6"></div><div class="t" style="left:326.30px;top:230px;font-size:10.3px;line-height:10.3px;color:#333;font-weight:700;transform:scaleX(0.8487);transform-origin:0 0;">John Antony [ CK 1329 ]</div><svg style="position:absolute;left:432.5px;top:227px;" width="15" height="14" viewBox="0 0 15 14"><path d="M2,3.2 L7,2.6 L12.4,2 L13,8.4 L14.4,11.6 L10.4,11.2 L8.2,13.2 L5,11.6 L1.2,12.2 L2.8,8z" fill="#f9c74a"/><rect x="4" y="4.4" width="7.4" height="1.5" fill="#a39a3a"/><rect x="4" y="7.2" width="7.4" height="1.5" fill="#a39a3a"/><rect x="5" y="7.2" width="1.1" height="1.5" fill="#9fd22a"/><rect x="8.4" y="7.2" width="1.1" height="1.5" fill="#9fd22a"/><circle cx="7.8" cy="2.6" r="1.4" fill="#e2404f"/><circle cx="8.2" cy="4.6" r="0.9" fill="#f07a8a"/></svg><svg style="position:absolute;left:450px;top:228px;" width="14" height="12" viewBox="0 0 14 12"><path d="M0.6,1.6 h11.8 v7.6 h-5.6 l-2.4,2.2 l0.1,-2.2 h-3.9z" fill="#fff" stroke="#f3845f" stroke-width="1"/><g fill="#1f80c6"><circle cx="3.4" cy="5.4" r="0.85"/><circle cx="6.5" cy="5.4" r="0.85"/><circle cx="9.6" cy="5.4" r="0.85"/></g></svg><svg style="position:absolute;left:327.5px;top:249.5px;" width="34" height="34" viewBox="0 0 34 34"><defs><clipPath id="ph"><circle cx="17" cy="17" r="15.9"/></clipPath></defs>
<g clip-path="url(#ph)"><rect width="34" height="34" fill="#e6ecef"/><ellipse cx="6" cy="16" rx="6" ry="3.2" fill="#7fa6bf"/><rect x="0" y="18" width="12" height="3" fill="#cfdde6"/><ellipse cx="28" cy="10" rx="4" ry="6" fill="#d5e3ea"/>
<path d="M3,34 q1,-8 10,-9.5 l6,3 l6,-3 q9,1.5 11,9.5z" fill="#a9a49e"/><path d="M15.5,26 l3.5,8 l3.5,-8z" fill="#e0843a"/>
<ellipse cx="19" cy="15" rx="6.2" ry="8.6" fill="#d29a7c"/><path d="M12.6,13 q-0.6,-9.6 6.8,-9.8 q7.6,0 6.4,9.8 l-0.8,-4 q-5.6,-2.6 -11.4,0z" fill="#2b1f1a"/>
<path d="M16,20.5 q3,1.8 6,0" stroke="#f2e6e0" stroke-width="1" fill="none"/></g></svg><div class="t" style="left:363.30px;top:245px;font-size:9.2px;line-height:9.2px;color:#6b6b6b;font-weight:400;transform:scaleX(0.8104);transform-origin:0 0;-webkit-text-stroke:0.2px currentColor;">Reason</div><div class="t" style="left:363.30px;top:261px;font-size:9.2px;line-height:9.2px;color:#6b6b6b;font-weight:400;transform:scaleX(0.8878);transform-origin:0 0;-webkit-text-stroke:0.2px currentColor;">DOB</div><div class="t" style="left:363.30px;top:276px;font-size:9.2px;line-height:9.2px;color:#6b6b6b;font-weight:400;transform:scaleX(0.9087);transform-origin:0 0;-webkit-text-stroke:0.2px currentColor;">Status</div><div class="t" style="left:401.70px;top:261px;font-size:9.2px;line-height:9.2px;color:#222;font-weight:400;transform:scaleX(0.9282);transform-origin:0 0;-webkit-text-stroke:0.2px currentColor;">Dec 18, 1963</div><svg style="position:absolute;left:459.5px;top:259.5px;" width="8" height="10" viewBox="0 0 8 10"><path d="M1.5,0.3 l1.6,2.3 l-0.9,1.2 q0.8,2 2.6,3.2 l1.1,-0.8 l1.9,1.9 l-1.3,1.4 q-4.5,-0.8 -6.3,-7.4z" fill="#555"/></svg><div class="t" style="left:469.00px;top:261px;font-size:9.2px;line-height:9.2px;color:#222;font-weight:400;transform:scaleX(0.9804);transform-origin:0 0;-webkit-text-stroke:0.2px currentColor;">678-309-1144</div><div style="position:absolute;left:402px;top:275px;width:59px;height:12px;background:#adca0f"></div><div class="t" style="left:406.60px;top:277px;font-size:9.2px;line-height:9.2px;color:#fff;font-weight:400;transform:scaleX(0.9048);transform-origin:0 0;-webkit-text-stroke:0.2px currentColor;">Confirmed</div><svg style="position:absolute;left:450px;top:279px;" width="7" height="4" viewBox="0 0 7 4"><path d="M0.5,0.5 h6 l-3,3z" fill="#fff"/></svg><div class="t" style="left:326.40px;top:294px;font-size:9.2px;line-height:9.2px;color:#6b6b6b;font-weight:400;transform:scaleX(0.8923);transform-origin:0 0;-webkit-text-stroke:0.2px currentColor;">Linked Patient(s)</div><div class="t" style="left:401.70px;top:294px;font-size:9.2px;line-height:9.2px;color:#1f88d0;font-weight:400;transform:scaleX(0.9554);transform-origin:0 0;-webkit-text-stroke:0.2px currentColor;">matt test</div><div style="position:absolute;left:659px;top:231px;width:6px;height:6px;background:#f47a32;border-radius:1px"></div><div class="t" style="left:671.00px;top:230px;font-size:10.3px;line-height:10.3px;color:#333;font-weight:700;transform:scaleX(0.8392);transform-origin:0 0;">Dr. Steven Antonio</div><div class="t" style="left:758.00px;top:230px;font-size:10px;line-height:10px;color:#999;font-weight:400;-webkit-text-stroke:0.2px currentColor;">|</div><div class="t" style="left:768.00px;top:230px;font-size:10.3px;line-height:10.3px;color:#333;font-weight:700;transform:scaleX(0.8561);transform-origin:0 0;">12:45 pm - 01:00 pm</div><div class="t" style="left:594.70px;top:245px;font-size:9.2px;line-height:9.2px;color:#6b6b6b;font-weight:400;transform:scaleX(0.9178);transform-origin:0 0;-webkit-text-stroke:0.2px currentColor;">Visit Type</div><div class="t" style="left:641.50px;top:245px;font-size:9.2px;line-height:9.2px;color:#555;font-weight:400;-webkit-text-stroke:0.2px currentColor;">-</div><div class="t" style="left:594.70px;top:261px;font-size:9.2px;line-height:9.2px;color:#6b6b6b;font-weight:400;transform:scaleX(0.9231);transform-origin:0 0;-webkit-text-stroke:0.2px currentColor;">Last Visit</div><div class="t" style="left:640.00px;top:261px;font-size:9.2px;line-height:9.2px;color:#1f88d0;font-weight:400;transform:scaleX(0.9226);transform-origin:0 0;-webkit-text-stroke:0.2px currentColor;">Jul 23, 2019</div><div class="t" style="left:594.70px;top:276px;font-size:9.2px;line-height:9.2px;color:#6b6b6b;font-weight:400;transform:scaleX(0.8457);transform-origin:0 0;-webkit-text-stroke:0.2px currentColor;">Resource</div><div style="position:absolute;left:640px;top:275px;width:57px;height:12px;border:1px solid #e8e8e8;background:#fff"></div><div class="t" style="left:644.00px;top:278px;font-size:9.2px;line-height:9.2px;color:#222;font-weight:400;transform:scaleX(0.9316);transform-origin:0 0;-webkit-text-stroke:0.2px currentColor;">-- Select --</div><svg style="position:absolute;left:687.6px;top:279.6px;" width="8" height="5" viewBox="0 0 8 5"><path d="M0.5,0.5 h7 l-3.5,3.6z" fill="#555"/></svg><div class="t" style="left:746.80px;top:245px;font-size:9.2px;line-height:9.2px;color:#6b6b6b;font-weight:400;transform:scaleX(0.8954);transform-origin:0 0;-webkit-text-stroke:0.2px currentColor;">Patient Balance Due</div><div class="t" style="left:827.80px;top:245px;font-size:9.2px;line-height:9.2px;color:#1f88d0;font-weight:400;transform:scaleX(0.8682);transform-origin:0 0;-webkit-text-stroke:0.2px currentColor;">Show</div><div class="t" style="left:798.80px;top:261px;font-size:9.2px;line-height:9.2px;color:#6b6b6b;font-weight:400;transform:scaleX(0.8723);transform-origin:0 0;-webkit-text-stroke:0.2px currentColor;">Copay</div><div class="t" style="left:828.00px;top:261px;font-size:9.2px;line-height:9.2px;color:#222;font-weight:400;transform:scaleX(0.9091);transform-origin:0 0;-webkit-text-stroke:0.2px currentColor;">$ 0.00</div><div class="t" style="left:783.90px;top:276px;font-size:9.2px;line-height:9.2px;color:#6b6b6b;font-weight:400;transform:scaleX(0.9084);transform-origin:0 0;-webkit-text-stroke:0.2px currentColor;">Encounter</div><div class="t" style="left:828.00px;top:276px;font-size:9.2px;line-height:9.2px;color:#1f88d0;font-weight:400;transform:scaleX(0.8832);transform-origin:0 0;-webkit-text-stroke:0.2px currentColor;">Edit</div><div class="t" style="left:587.70px;top:294px;font-size:9.2px;line-height:9.2px;color:#1f88d0;font-weight:400;transform:scaleX(0.9232);transform-origin:0 0;-webkit-text-stroke:0.2px currentColor;">Insurance Eligibility</div><div class="t" style="left:666.20px;top:294px;font-size:9.2px;line-height:9.2px;color:#777;font-weight:400;-webkit-text-stroke:0.2px currentColor;">|</div><div class="t" style="left:671.90px;top:294px;font-size:9.2px;line-height:9.2px;color:#1f88d0;font-weight:400;transform:scaleX(0.8587);transform-origin:0 0;-webkit-text-stroke:0.2px currentColor;">Face Sheet</div><div class="t" style="left:718.20px;top:294px;font-size:9.2px;line-height:9.2px;color:#777;font-weight:400;-webkit-text-stroke:0.2px currentColor;">|</div><div class="t" style="left:724.00px;top:294px;font-size:9.2px;line-height:9.2px;color:#1f88d0;font-weight:400;transform:scaleX(0.9113);transform-origin:0 0;-webkit-text-stroke:0.2px currentColor;">Questionnaire</div><div class="t" style="left:782.20px;top:294px;font-size:9.2px;line-height:9.2px;color:#777;font-weight:400;-webkit-text-stroke:0.2px currentColor;">|</div><div class="t" style="left:787.90px;top:294px;font-size:9.2px;line-height:9.2px;color:#1f88d0;font-weight:400;transform:scaleX(0.8953);transform-origin:0 0;-webkit-text-stroke:0.2px currentColor;">Past Visits</div><div class="t" style="left:832.70px;top:294px;font-size:9.2px;line-height:9.2px;color:#777;font-weight:400;-webkit-text-stroke:0.2px currentColor;">|</div><div class="t" style="left:837.90px;top:294px;font-size:9.2px;line-height:9.2px;color:#1f88d0;font-weight:400;transform:scaleX(0.8156);transform-origin:0 0;-webkit-text-stroke:0.2px currentColor;">Scan</div><div style="position:absolute;left:320px;top:307px;width:542px;height:1px;background:#e6e6e6"></div><div class="t" style="left:326.30px;top:314px;font-size:10.3px;line-height:10.3px;color:#333;font-weight:700;transform:scaleX(0.8771);transform-origin:0 0;">Mary Dryer [ CK 0066 ]</div><svg style="position:absolute;left:429.5px;top:312px;" width="14" height="12" viewBox="0 0 14 12"><path d="M0.6,1.6 h11.8 v7.6 h-5.6 l-2.4,2.2 l0.1,-2.2 h-3.9z" fill="#fff" stroke="#f3845f" stroke-width="1"/><g fill="#1f80c6"><circle cx="3.4" cy="5.4" r="0.85"/><circle cx="6.5" cy="5.4" r="0.85"/><circle cx="9.6" cy="5.4" r="0.85"/></g></svg><svg style="position:absolute;left:327.5px;top:333.5px;" width="34" height="34" viewBox="0 0 34 34"><defs><clipPath id="pc333"><circle cx="17" cy="17" r="16"/></clipPath></defs><circle cx="17" cy="17" r="16.2" fill="#fff" stroke="#e2e2e2" stroke-width="0.7"/><g clip-path="url(#pc333)" fill="#c8c8c8"><ellipse cx="17.1" cy="13.5" rx="6.7" ry="7.1"/><path d="M5.8,33 q0,-11.5 11.3,-12.3 q11.3,0.8 11.3,12.3z"/></g></svg><div class="t" style="left:363.30px;top:329px;font-size:9.2px;line-height:9.2px;color:#6b6b6b;font-weight:400;transform:scaleX(0.8104);transform-origin:0 0;-webkit-text-stroke:0.2px currentColor;">Reason</div><div class="t" style="left:363.30px;top:345px;font-size:9.2px;line-height:9.2px;color:#6b6b6b;font-weight:400;transform:scaleX(0.8878);transform-origin:0 0;-webkit-text-stroke:0.2px currentColor;">DOB</div><div class="t" style="left:363.30px;top:360px;font-size:9.2px;line-height:9.2px;color:#6b6b6b;font-weight:400;transform:scaleX(0.9087);transform-origin:0 0;-webkit-text-stroke:0.2px currentColor;">Status</div><div class="t" style="left:401.70px;top:345px;font-size:9.2px;line-height:9.2px;color:#222;font-weight:400;transform:scaleX(0.9281);transform-origin:0 0;-webkit-text-stroke:0.2px currentColor;">Apr 16, 1959</div><svg style="position:absolute;left:458.2px;top:343.5px;" width="8" height="10" viewBox="0 0 8 10"><path d="M1.5,0.3 l1.6,2.3 l-0.9,1.2 q0.8,2 2.6,3.2 l1.1,-0.8 l1.9,1.9 l-1.3,1.4 q-4.5,-0.8 -6.3,-7.4z" fill="#555"/></svg><div class="t" style="left:469.00px;top:345px;font-size:9.2px;line-height:9.2px;color:#222;font-weight:400;transform:scaleX(0.9686);transform-origin:0 0;-webkit-text-stroke:0.2px currentColor;">602-826-6322</div><div style="position:absolute;left:402px;top:359px;width:59px;height:12px;background:#adca0f"></div><div class="t" style="left:406.60px;top:361px;font-size:9.2px;line-height:9.2px;color:#fff;font-weight:400;transform:scaleX(0.9048);transform-origin:0 0;-webkit-text-stroke:0.2px currentColor;">Confirmed</div><svg style="position:absolute;left:450px;top:363px;" width="7" height="4" viewBox="0 0 7 4"><path d="M0.5,0.5 h6 l-3,3z" fill="#fff"/></svg><div class="t" style="left:326.40px;top:378px;font-size:9.2px;line-height:9.2px;color:#6b6b6b;font-weight:400;transform:scaleX(0.8923);transform-origin:0 0;-webkit-text-stroke:0.2px currentColor;">Linked Patient(s)</div><div class="t" style="left:401.70px;top:378px;font-size:9.2px;line-height:9.2px;color:#1f88d0;font-weight:400;transform:scaleX(0.8758);transform-origin:0 0;-webkit-text-stroke:0.2px currentColor;">Paul Kumar</div><div style="position:absolute;left:659px;top:315px;width:6px;height:6px;background:#f47a32;border-radius:1px"></div><div class="t" style="left:671.00px;top:314px;font-size:10.3px;line-height:10.3px;color:#333;font-weight:700;transform:scaleX(0.8392);transform-origin:0 0;">Dr. Steven Antonio</div><div class="t" style="left:758.00px;top:314px;font-size:10px;line-height:10px;color:#999;font-weight:400;-webkit-text-stroke:0.2px currentColor;">|</div><div class="t" style="left:768.00px;top:314px;font-size:10.3px;line-height:10.3px;color:#333;font-weight:700;transform:scaleX(0.8561);transform-origin:0 0;">03:00 pm - 03:15 pm</div><div class="t" style="left:594.70px;top:329px;font-size:9.2px;line-height:9.2px;color:#6b6b6b;font-weight:400;transform:scaleX(0.9178);transform-origin:0 0;-webkit-text-stroke:0.2px currentColor;">Visit Type</div><div class="t" style="left:641.50px;top:329px;font-size:9.2px;line-height:9.2px;color:#555;font-weight:400;-webkit-text-stroke:0.2px currentColor;">-</div><div class="t" style="left:594.70px;top:345px;font-size:9.2px;line-height:9.2px;color:#6b6b6b;font-weight:400;transform:scaleX(0.9231);transform-origin:0 0;-webkit-text-stroke:0.2px currentColor;">Last Visit</div><div class="t" style="left:640.00px;top:345px;font-size:9.2px;line-height:9.2px;color:#222;font-weight:400;transform:scaleX(0.9238);transform-origin:0 0;-webkit-text-stroke:0.2px currentColor;">No previous visits</div><div class="t" style="left:594.70px;top:360px;font-size:9.2px;line-height:9.2px;color:#6b6b6b;font-weight:400;transform:scaleX(0.8457);transform-origin:0 0;-webkit-text-stroke:0.2px currentColor;">Resource</div><div style="position:absolute;left:640px;top:359px;width:57px;height:12px;border:1px solid #e8e8e8;background:#fff"></div><div class="t" style="left:644.00px;top:362px;font-size:9.2px;line-height:9.2px;color:#222;font-weight:400;transform:scaleX(0.9316);transform-origin:0 0;-webkit-text-stroke:0.2px currentColor;">-- Select --</div><svg style="position:absolute;left:687.6px;top:363.6px;" width="8" height="5" viewBox="0 0 8 5"><path d="M0.5,0.5 h7 l-3.5,3.6z" fill="#555"/></svg><div class="t" style="left:746.80px;top:329px;font-size:9.2px;line-height:9.2px;color:#6b6b6b;font-weight:400;transform:scaleX(0.8954);transform-origin:0 0;-webkit-text-stroke:0.2px currentColor;">Patient Balance Due</div><div class="t" style="left:827.80px;top:329px;font-size:9.2px;line-height:9.2px;color:#1f88d0;font-weight:400;transform:scaleX(0.8682);transform-origin:0 0;-webkit-text-stroke:0.2px currentColor;">Show</div><div class="t" style="left:798.80px;top:345px;font-size:9.2px;line-height:9.2px;color:#6b6b6b;font-weight:400;transform:scaleX(0.8723);transform-origin:0 0;-webkit-text-stroke:0.2px currentColor;">Copay</div><div class="t" style="left:828.00px;top:345px;font-size:9.2px;line-height:9.2px;color:#555;font-weight:400;-webkit-text-stroke:0.2px currentColor;">-</div><div class="t" style="left:783.90px;top:360px;font-size:9.2px;line-height:9.2px;color:#6b6b6b;font-weight:400;transform:scaleX(0.9084);transform-origin:0 0;-webkit-text-stroke:0.2px currentColor;">Encounter</div><div class="t" style="left:828.00px;top:360px;font-size:9.2px;line-height:9.2px;color:#1f88d0;font-weight:400;transform:scaleX(0.9058);transform-origin:0 0;-webkit-text-stroke:0.2px currentColor;">Start</div><div class="t" style="left:587.70px;top:378px;font-size:9.2px;line-height:9.2px;color:#1f88d0;font-weight:400;transform:scaleX(0.9232);transform-origin:0 0;-webkit-text-stroke:0.2px currentColor;">Insurance Eligibility</div><div class="t" style="left:666.20px;top:378px;font-size:9.2px;line-height:9.2px;color:#777;font-weight:400;-webkit-text-stroke:0.2px currentColor;">|</div><div class="t" style="left:671.90px;top:378px;font-size:9.2px;line-height:9.2px;color:#1f88d0;font-weight:400;transform:scaleX(0.8587);transform-origin:0 0;-webkit-text-stroke:0.2px currentColor;">Face Sheet</div><div class="t" style="left:718.20px;top:378px;font-size:9.2px;line-height:9.2px;color:#777;font-weight:400;-webkit-text-stroke:0.2px currentColor;">|</div><div class="t" style="left:724.00px;top:378px;font-size:9.2px;line-height:9.2px;color:#1f88d0;font-weight:400;transform:scaleX(0.9113);transform-origin:0 0;-webkit-text-stroke:0.2px currentColor;">Questionnaire</div><div class="t" style="left:782.20px;top:378px;font-size:9.2px;line-height:9.2px;color:#777;font-weight:400;-webkit-text-stroke:0.2px currentColor;">|</div><div class="t" style="left:787.90px;top:378px;font-size:9.2px;line-height:9.2px;color:#1f88d0;font-weight:400;transform:scaleX(0.8953);transform-origin:0 0;-webkit-text-stroke:0.2px currentColor;">Past Visits</div><div class="t" style="left:832.70px;top:378px;font-size:9.2px;line-height:9.2px;color:#777;font-weight:400;-webkit-text-stroke:0.2px currentColor;">|</div><div class="t" style="left:837.90px;top:378px;font-size:9.2px;line-height:9.2px;color:#1f88d0;font-weight:400;transform:scaleX(0.8156);transform-origin:0 0;-webkit-text-stroke:0.2px currentColor;">Scan</div><div style="position:absolute;left:320px;top:390px;width:542px;height:2px;background:#efefef"></div>
</body></html>
